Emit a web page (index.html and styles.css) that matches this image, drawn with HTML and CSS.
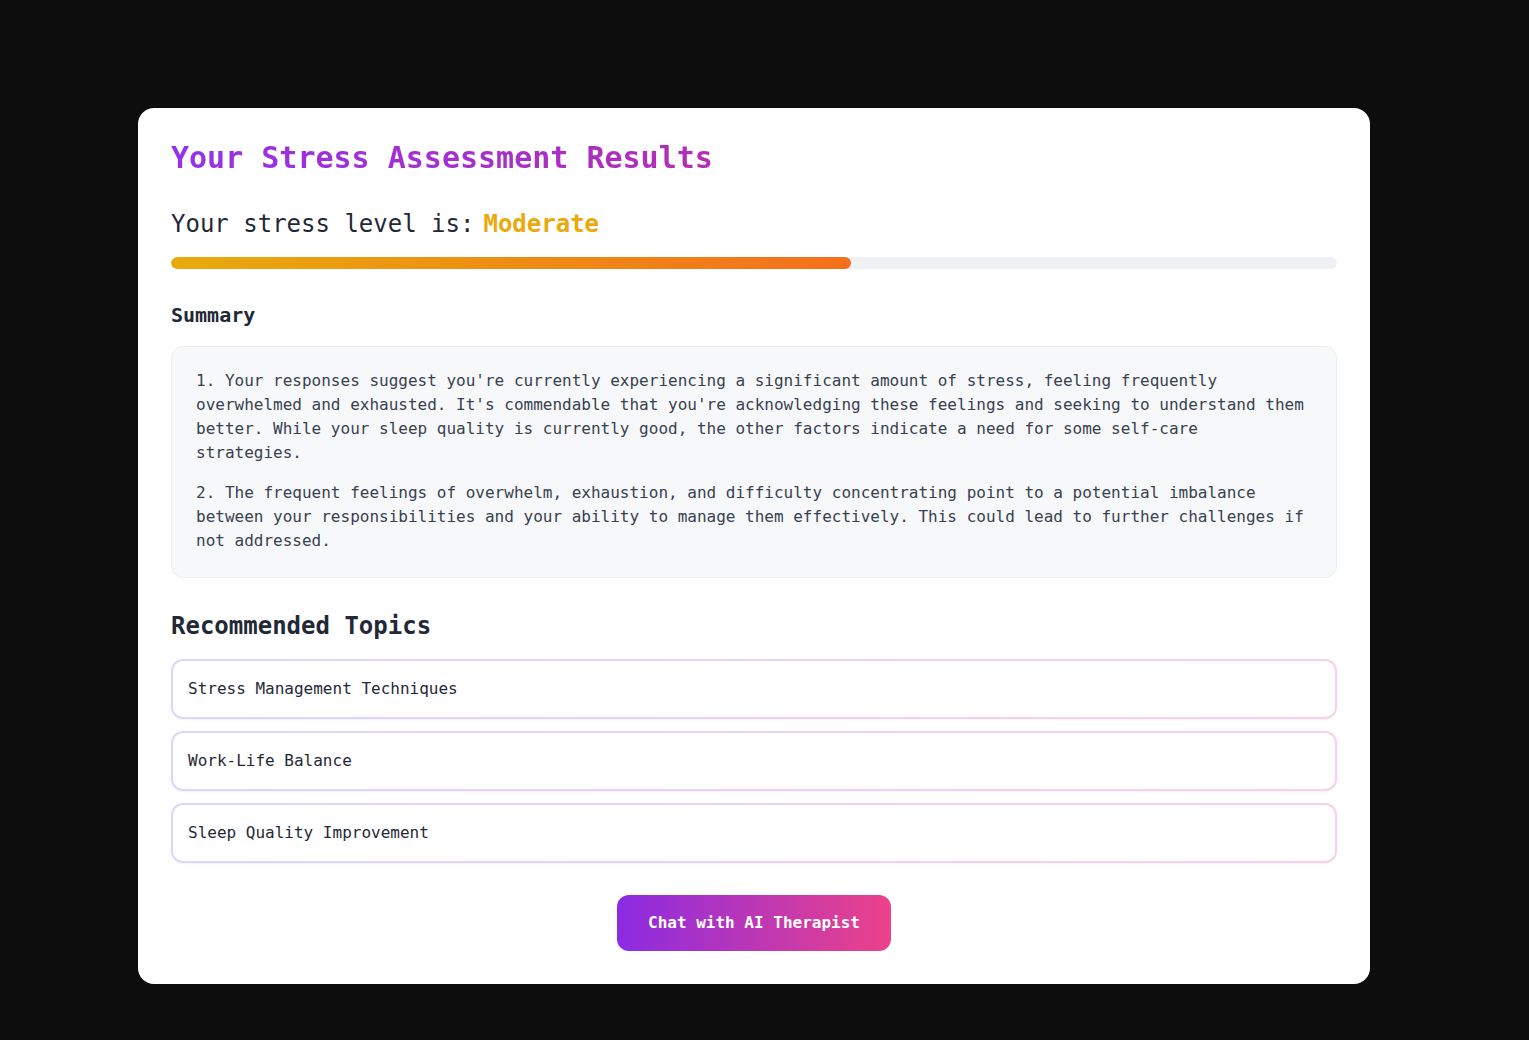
FILE: index.html
```html
<!DOCTYPE html>
<html lang="en">
<head>
<meta charset="utf-8">
<title>Stress Assessment Results</title>
<link rel="stylesheet" href="styles.css">
</head>
<body>
<main class="page">
  <section class="card">
    <h1 class="title">Your Stress Assessment Results</h1>
    <div class="level">
      <span class="level-label">Your stress level is:</span>
      <span class="level-value">Moderate</span>
    </div>
    <div class="bar"><div class="bar-fill" style="width: 58.3%"></div></div>

    <h2 class="summary-title">Summary</h2>
    <div class="summary">
      <p>1. Your responses suggest you're currently experiencing a significant amount of stress, feeling frequently overwhelmed and exhausted. It's commendable that you're acknowledging these feelings and seeking to understand them better. While your sleep quality is currently good, the other factors indicate a need for some self-care strategies.</p>
      <p>2. The frequent feelings of overwhelm, exhaustion, and difficulty concentrating point to a potential imbalance between your responsibilities and your ability to manage them effectively. This could lead to further challenges if not addressed.</p>
    </div>

    <h2 class="topics-title">Recommended Topics</h2>
    <ul class="topics">
      <li class="topic"><div class="topic-inner">Stress Management Techniques</div></li>
      <li class="topic"><div class="topic-inner">Work-Life Balance</div></li>
      <li class="topic"><div class="topic-inner">Sleep Quality Improvement</div></li>
    </ul>

    <div class="actions">
      <button class="chat-btn" type="button">Chat with AI Therapist</button>
    </div>
  </section>
</main>
</body>
</html>
```

FILE: styles.css
```css
* { box-sizing: border-box; }

html, body {
  margin: 0;
  padding: 0;
  background: #0d0d0d;
}

body {
  font-family: "DejaVu Sans Mono", "Liberation Mono", monospace;
  color: #1f2937;
}

.page {
  min-height: 1040px;
  display: flex;
  justify-content: center;
  padding: 108px 21px 0 0;
}

.card {
  width: 1232px;
  height: 876px;
  background: #ffffff;
  border-radius: 16px;
  padding: 32px 33px 33px 33px;
  display: flex;
  flex-direction: column;
}

.title {
  margin: 0;
  font-size: 30px;
  line-height: 36px;
  font-weight: 700;
  background: linear-gradient(90deg, #9333ea 0%, #db2777 100%);
  -webkit-background-clip: text;
  background-clip: text;
  color: transparent;
}

.level {
  margin-top: 32px;
  display: flex;
  align-items: center;
  gap: 9px;
  font-size: 24px;
  line-height: 32px;
}

.level-label { color: #1f2937; }

.level-value {
  color: #eaa90c;
  font-weight: 700;
}

.bar {
  margin-top: 17px;
  height: 12px;
  border-radius: 9999px;
  background: #f0f1f4;
  overflow: hidden;
}

.bar-fill {
  height: 100%;
  border-radius: 9999px;
  background: linear-gradient(90deg, #e8aa0c 0%, #f4701c 100%);
}

.summary-title {
  margin: 32px 0 0 0;
  font-size: 20px;
  line-height: 28px;
  font-weight: 700;
  color: #1f2937;
}

.summary {
  margin-top: 17px;
  background: #f7f8fa;
  border: 1px solid #eceef1;
  border-radius: 12px;
  padding: 22px 24px 24px 24px;
  color: #374151;
  font-size: 16px;
  line-height: 24px;
}

.summary p { margin: 0; }
.summary p + p { margin-top: 16px; }

.topics-title {
  margin: 32px 0 0 0;
  font-size: 24px;
  line-height: 32px;
  font-weight: 700;
  color: #1f2937;
}

.topics {
  list-style: none;
  margin: 17px 0 0 0;
  padding: 0;
  display: flex;
  flex-direction: column;
  gap: 12px;
}

.topic {
  padding: 2px;
  border-radius: 12px;
  background: linear-gradient(90deg, #ddd6fe 0%, #fbcfe8 100%);
  box-shadow: 0 1px 2px rgba(0, 0, 0, 0.05);
}

.topic-inner {
  background: #ffffff;
  border-radius: 10px;
  padding: 16px 15px;
  font-size: 16px;
  line-height: 24px;
  color: #1f2937;
}

.actions {
  margin-top: 32px;
  display: flex;
  justify-content: center;
}

.chat-btn {
  border: none;
  cursor: pointer;
  font-family: "DejaVu Sans Mono", "Liberation Mono", monospace;
  font-size: 16px;
  font-weight: 700;
  line-height: 24px;
  color: #ffffff;
  padding: 16px 31px;
  white-space: nowrap;
  height: 56px;
  border-radius: 12px;
  background: linear-gradient(90deg, #8b2be2 0%, #ec4289 100%);
}
```
